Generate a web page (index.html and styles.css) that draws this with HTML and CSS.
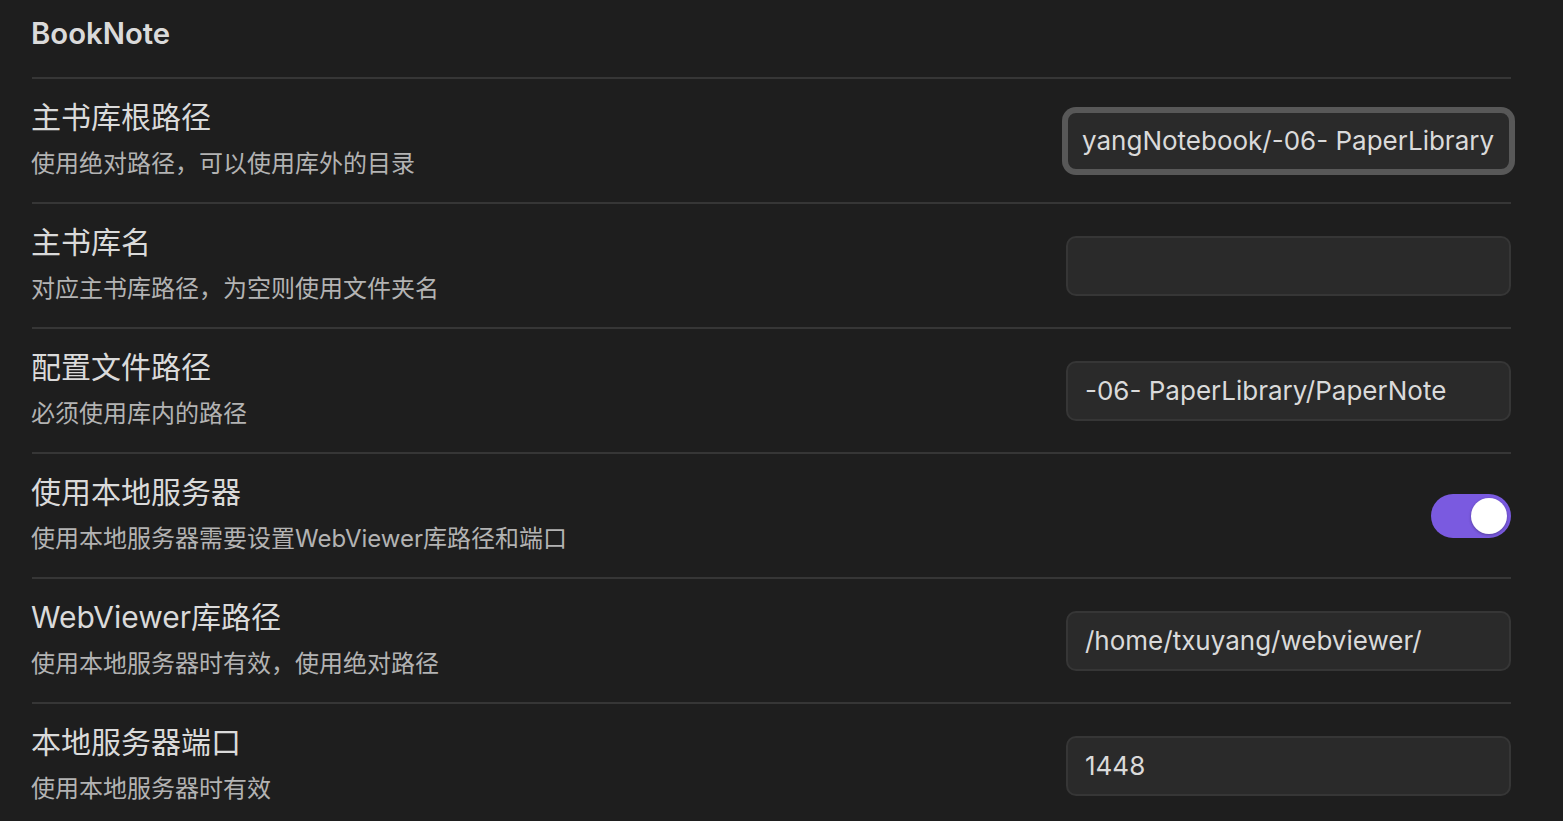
FILE: index.html
```html
<!DOCTYPE html>
<html lang="zh-CN">
<head>
<meta charset="utf-8">
<title>BookNote</title>
<link rel="stylesheet" href="styles.css">
</head>
<body>
<div class="page">
  <div class="heading">BookNote</div>

  <div class="row">
    <div class="info">
      <div class="name">主书库根路径</div>
      <div class="desc">使用绝对路径，可以使用库外的目录</div>
    </div>
    <div class="control">
      <input class="field focused" type="text" value="yangNotebook/-06- PaperLibrary">
    </div>
  </div>

  <div class="row">
    <div class="info">
      <div class="name">主书库名</div>
      <div class="desc">对应主书库路径，为空则使用文件夹名</div>
    </div>
    <div class="control">
      <input class="field" type="text" value="">
    </div>
  </div>

  <div class="row">
    <div class="info">
      <div class="name">配置文件路径</div>
      <div class="desc">必须使用库内的路径</div>
    </div>
    <div class="control">
      <input class="field" type="text" value="-06- PaperLibrary/PaperNote">
    </div>
  </div>

  <div class="row">
    <div class="info">
      <div class="name">使用本地服务器</div>
      <div class="desc">使用本地服务器需要设置WebViewer库路径和端口</div>
    </div>
    <div class="control">
      <div class="toggle on"><div class="knob"></div></div>
    </div>
  </div>

  <div class="row">
    <div class="info">
      <div class="name">WebViewer库路径</div>
      <div class="desc">使用本地服务器时有效，使用绝对路径</div>
    </div>
    <div class="control">
      <input class="field" type="text" value="/home/txuyang/webviewer/">
    </div>
  </div>

  <div class="row">
    <div class="info">
      <div class="name">本地服务器端口</div>
      <div class="desc">使用本地服务器时有效</div>
    </div>
    <div class="control">
      <input class="field" type="text" value="1448">
    </div>
  </div>
</div>
</body>
</html>
```

FILE: styles.css
```css
html, body {
  margin: 0;
  padding: 0;
  background: #1e1e1e;
  height: 100%;
  overflow: hidden;
}

body {
  font-family: Inter, "Noto Sans CJK SC", sans-serif;
  color: #dadada;
}

.page {
  padding: 0 52px 0 32px;
}

.heading {
  box-sizing: border-box;
  height: 77px;
  padding-top: 16px;
  margin-left: -1px;
  font-size: 29.3px;
  line-height: 36px;
  font-weight: 600;
  color: #dadada;
}

.row {
  box-sizing: border-box;
  height: 125px;
  border-top: 2px solid #363636;
  display: flex;
  align-items: center;
}

.info {
  flex: 1;
  min-width: 0;
  padding-bottom: 4px;
  margin-left: -1px;
}

.name {
  font-size: 30px;
  line-height: 42px;
  color: #dadada;
}

.desc {
  font-size: 24px;
  line-height: 36px;
  color: #b3b3b3;
  margin-top: 8px;
}

.control {
  display: flex;
  justify-content: flex-end;
  align-items: center;
}

.field {
  box-sizing: border-box;
  width: 445px;
  height: 60px;
  margin: 0;
  padding: 0 17px;
  background: #2a2a2a;
  border: 2px solid #363636;
  border-radius: 10px;
  color: #dadada;
  font-family: Inter, "Noto Sans CJK SC", sans-serif;
  font-size: 26px;
  outline: none;
}

.field.focused {
  border-color: #585858;
  box-shadow: 0 0 0 4px #585858;
  padding-left: 14px;
  padding-right: 4px;
}

.toggle {
  position: relative;
  width: 80px;
  height: 44px;
  border-radius: 22px;
  background: #7a5ae0;
}

.knob {
  position: absolute;
  top: 4px;
  right: 4px;
  width: 36px;
  height: 36px;
  border-radius: 50%;
  background: #ffffff;
  box-shadow: 0 1px 3px rgba(0, 0, 0, 0.3);
}
```
